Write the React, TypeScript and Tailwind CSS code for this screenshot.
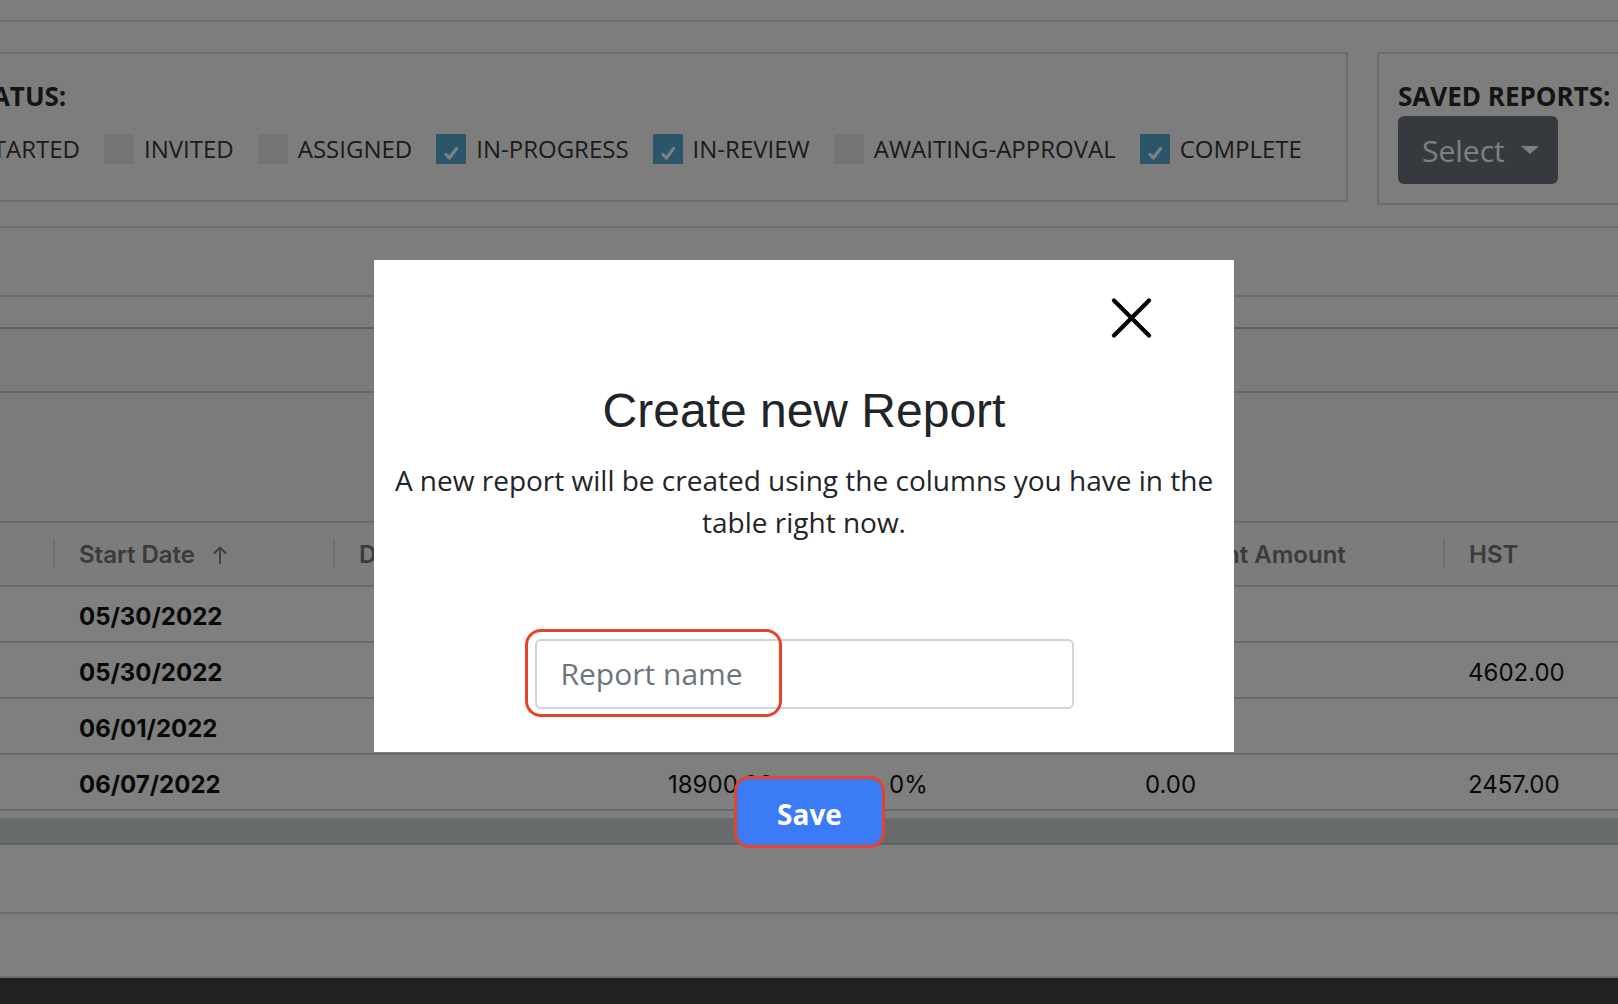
import React from 'react'

type Status = { label: string; checked: boolean }

const STATUSES: Status[] = [
  { label: 'NOT-STARTED', checked: false },
  { label: 'INVITED', checked: false },
  { label: 'ASSIGNED', checked: false },
  { label: 'IN-PROGRESS', checked: true },
  { label: 'IN-REVIEW', checked: true },
  { label: 'AWAITING-APPROVAL', checked: false },
  { label: 'COMPLETE', checked: true },
]

const COLUMNS = ['Client', 'Start Date', 'Due Date', 'Amount', 'Discount', 'Discount Amount', 'HST']

const ROWS = [
  { start: '05/30/2022', due: '', amount: '', discount: '', discountAmount: '', hst: '' },
  { start: '05/30/2022', due: '', amount: '35400.00', discount: '0%', discountAmount: '0.00', hst: '4602.00' },
  { start: '06/01/2022', due: '', amount: '', discount: '', discountAmount: '', hst: '' },
  { start: '06/07/2022', due: '', amount: '18900.00', discount: '0%', discountAmount: '0.00', hst: '2457.00' },
]

function Checkbox({ checked }: { checked: boolean }) {
  return (
    <span
      className={`flex h-[30px] w-[30px] shrink-0 items-center justify-center ${
        checked ? 'bg-[#56aad0]' : 'bg-[#e9e9e9]'
      }`}
    >
      {checked && (
        <svg viewBox="0 0 30 30" className="h-[30px] w-[30px]">
          <path d="M10 20.5 L13.5 24 L20.5 14.5" fill="none" stroke="#ffffff" strokeWidth="3.2" strokeLinecap="round" strokeLinejoin="round" />
        </svg>
      )}
    </span>
  )
}

function SortUp() {
  return (
    <svg viewBox="0 0 14 18" className="h-[18px] w-[14px]">
      <path d="M7 17V1.5M1.5 7L7 1.5L12.5 7" fill="none" stroke="#777777" strokeWidth="1.8" strokeLinecap="round" strokeLinejoin="round" />
    </svg>
  )
}

function StatusFilters() {
  return (
    <div className="-ml-[140px] w-[1488px] shrink-0 border-2 border-[#d8d8d8] pb-[36px] pl-[20px] pt-[23px]">
      <div className="ml-[27px] text-[26px] font-bold leading-[39px] text-[#282828]">JOB STATUS:</div>
      <div className="mt-[18px] flex h-[30px] items-center gap-[24px]">
        {STATUSES.map(s => (
          <label key={s.label} className="flex items-center gap-[10px] whitespace-nowrap text-[24px] leading-[30px] text-[#363636]">
            <Checkbox checked={s.checked} />
            {s.label}
          </label>
        ))}
      </div>
    </div>
  )
}

function SavedReports() {
  return (
    <div className="ml-[29px] w-[320px] shrink-0 border-2 border-[#d8d8d8] pb-[19px] pl-[19px] pt-[23px]">
      <div className="whitespace-nowrap text-[26px] font-bold leading-[39px] text-[#282828]">SAVED REPORTS:</div>
      <button className="flex h-[68px] w-[160px] items-center rounded-[6px] bg-[#6c757d] pl-[24px] text-[30px] text-white">
        Select
        <span className="ml-[16px] h-0 w-0 border-x-[9px] border-t-[8px] border-x-transparent border-t-white" />
      </button>
    </div>
  )
}

function ReportTable() {
  return (
    <div className="shrink-0 font-['Inter',sans-serif]">
      <div className="grid h-[66px] grid-cols-[53px_280px_309px_221px_256px_324px_175px] border-y-2 border-[#d4d4d4] bg-[#f7f8f7]">
        {COLUMNS.map((c, i) => (
          <div key={c} className="flex items-center overflow-hidden whitespace-nowrap">
            {i > 0 && <span className="h-[30px] w-[2px] shrink-0 bg-[#dedede]" />}
            {i > 0 && (
              <span className="flex items-center gap-[18px] pl-[24px] pt-[2px] text-[24px] font-semibold text-[#767676]">
                {c}
                {c === 'Start Date' && <SortUp />}
              </span>
            )}
          </div>
        ))}
      </div>
      {ROWS.map((r, i) => (
        <div
          key={i}
          className="grid h-[56px] grid-cols-[53px_280px_309px_221px_256px_324px_175px] items-center border-b-2 border-[#d4d4d4] bg-white pt-[5px] text-[24px] text-[#111111]"
        >
          <div />
          <div className="pl-[26px] font-bold">{r.start}</div>
          <div className="pl-[26px]">{r.due}</div>
          <div className="pl-[26px]">{r.amount}</div>
          <div className="pl-[26px]">{r.discount}</div>
          <div className="pl-[26px]">{r.discountAmount}</div>
          <div className="pl-[25px]">{r.hst}</div>
        </div>
      ))}
    </div>
  )
}

function CloseIcon() {
  return (
    <svg viewBox="0 0 41 40" className="h-[40px] w-[41px]">
      <path d="M3 2.5L38 37.5M38 2.5L3 37.5" fill="none" stroke="#000000" strokeWidth="4.2" strokeLinecap="round" />
    </svg>
  )
}

function CreateReportModal() {
  return (
    <div className="fixed inset-0 flex justify-center pr-[10px] pt-[260px]">
      <div className="relative h-[492px] w-[860px] bg-white pt-[38px] font-['Open_Sans',sans-serif] text-[#212529]">
        <div className="flex justify-end pr-[82px]">
          <button>
            <CloseIcon />
          </button>
        </div>
        <h2 className="mt-[44px] text-center font-['Liberation_Sans',Arial,sans-serif] text-[48px] leading-[1.2]">
          Create new Report
        </h2>
        <p className="mt-[19px] px-[14px] text-center text-[28px] leading-[42px]">
          A new report will be created using the columns you have in the table right now.
        </p>
        <input
          placeholder="Report name"
          className="mx-auto mt-[96px] block h-[70px] w-[539px] rounded-[6px] border-2 border-[#ced4da] px-[24px] text-[30px] outline-none placeholder:text-[#6c757d]"
        />

        {/* highlight rings */}
        <div className="pointer-events-none absolute left-[151px] top-[369px] h-[88px] w-[257px] rounded-[16px] border-[3.5px] border-[#e5432c]" />
        <button className="absolute left-[360px] top-[516px] flex h-[72px] w-[151px] items-center justify-center rounded-[15px] border-[3.5px] border-[#e5432c] bg-[#3b7cf6] pt-[3px] text-[28px] font-bold text-white">
          Save
        </button>
      </div>
    </div>
  )
}

export default function App() {
  return (
    <div className="relative flex h-[1004px] w-full flex-col overflow-hidden bg-[#fcfbfd] font-['Open_Sans',sans-serif]">
      <div className="h-[22px] shrink-0 border-b-2 border-[#d6d6d6]" />
      <div className="flex shrink-0 items-start pt-[30px]">
        <StatusFilters />
        <SavedReports />
      </div>
      <div className="mt-[21px] h-[71px] shrink-0 border-y-2 border-[#d6d6d6]" />
      <div className="h-[32px] shrink-0 border-b-2 border-[#bebebe]" />
      <div className="shrink-0 bg-[#f5f8f5]">
        <div className="h-[64px] border-b-2 border-[#c8c8c8]" />
        <div className="h-[128px]" />
      </div>
      <ReportTable />
      <div className="h-[7px] shrink-0 bg-white" />
      <div className="h-[27px] shrink-0 border-b-2 border-[#c2c6c8] bg-[#ced6d8]" />
      <div className="h-[69px] shrink-0 border-b-2 border-[#d6d6d6] bg-white" />
      <div className="h-[64px] shrink-0 border-b-2 border-[#d6d6d6] bg-white" />
      <div className="flex-1 bg-[#444042]" />

      <div className="fixed inset-0 bg-black/50" />
      <CreateReportModal />
    </div>
  )
}
